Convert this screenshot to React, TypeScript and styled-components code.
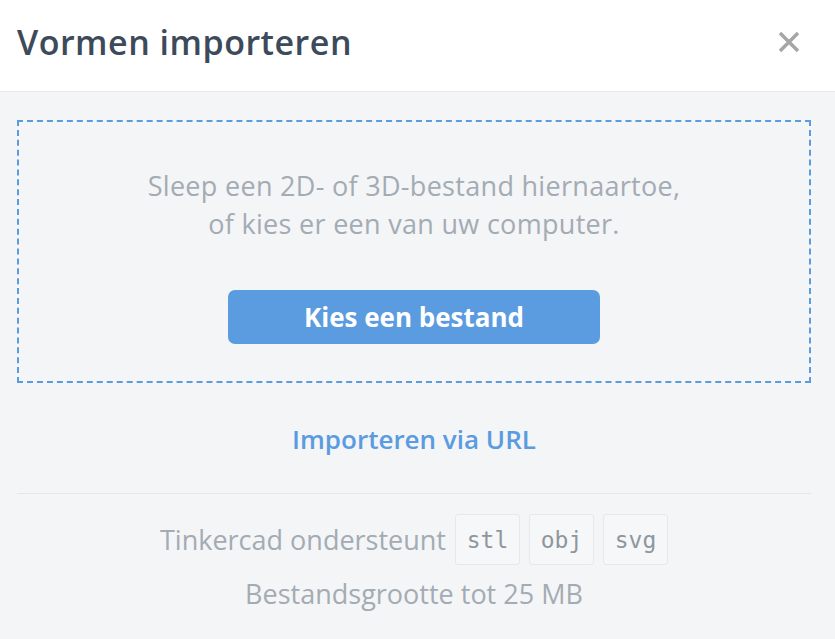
import React from 'react';
import styled, { createGlobalStyle } from 'styled-components';

const GlobalStyle = createGlobalStyle`
  html, body {
    margin: 0;
    padding: 0;
    background: #f4f5f7;
  }
  body {
    font-family: "Open Sans", "Noto Sans", sans-serif;
  }
`;

const Dialog = styled.div`
  width: 835px;
  height: 639px;
  background: #f4f5f7;
  display: flex;
  flex-direction: column;
  overflow: hidden;
`;

const Header = styled.header`
  height: 92px;
  background: #ffffff;
  border-bottom: 1px solid #e6e8eb;
  display: flex;
  align-items: center;
  justify-content: space-between;
  padding: 0 33px 8px 17px;
  box-sizing: border-box;
`;

const Title = styled.h1`
  margin: 0;
  font-size: 34px;
  font-weight: 600;
  color: #3c4a5a;
  letter-spacing: 0.5px;
`;

const CloseButton = styled.button`
  border: 0;
  background: transparent;
  padding: 0;
  width: 26px;
  height: 26px;
  display: flex;
  align-items: center;
  justify-content: center;
  cursor: pointer;
`;

const Body = styled.div`
  padding: 28px 24px 0 17px;
  display: flex;
  flex-direction: column;
  align-items: stretch;
`;

const DropZone = styled.div`
  border: 2px dashed #5b9be0;
  height: 263px;
  box-sizing: border-box;
  display: flex;
  flex-direction: column;
  align-items: center;
  padding-top: 45px;
`;

const Hint = styled.p`
  margin: 0;
  text-align: center;
  font-size: 27px;
  line-height: 38px;
  color: #a3abb3;
  letter-spacing: 0.3px;
`;

const PrimaryButton = styled.button`
  margin-top: 47px;
  width: 372px;
  height: 54px;
  border: 0;
  border-radius: 7px;
  background: #5b9be0;
  color: #ffffff;
  font-family: "Open Sans", "Noto Sans", sans-serif;
  font-size: 26px;
  font-weight: 700;
  cursor: pointer;
`;

const UrlLink = styled.a`
  align-self: center;
  margin-top: 37px;
  font-size: 26px;
  line-height: 38px;
  font-weight: 600;
  color: #5b9be0;
  text-decoration: none;
  cursor: pointer;
`;

const Divider = styled.hr`
  margin: 35px 0 0;
  border: 0;
  border-top: 1px solid #e4e6e9;
`;

const SupportRow = styled.div`
  margin-top: 20px;
  display: flex;
  align-items: center;
  justify-content: center;
  gap: 9px;
`;

const Muted = styled.span`
  font-size: 27px;
  line-height: 32px;
  color: #a3abb3;
`;

const Chip = styled.code`
  width: 65px;
  height: 51px;
  box-sizing: border-box;
  border: 1px solid #e6e8ea;
  border-radius: 3px;
  background: #f6f7f8;
  display: flex;
  align-items: center;
  justify-content: center;
  font-family: "DejaVu Sans Mono", "Liberation Mono", monospace;
  font-size: 23px;
  color: #8e969e;
`;

const SizeNote = styled(Muted)`
  margin-top: 13px;
  align-self: center;
`;

const formats = ['stl', 'obj', 'svg'];

const App = () => {
  return (
    <Dialog>
      <GlobalStyle />
      <Header>
        <Title>Vormen importeren</Title>
        <CloseButton aria-label="Sluiten">
          <svg width="22" height="22" viewBox="0 0 22 22">
            <path d="M2 2 L20 20 M20 2 L2 20" stroke="#a6a6a6" strokeWidth="3.5" />
          </svg>
        </CloseButton>
      </Header>
      <Body>
        <DropZone>
          <Hint>
            Sleep een 2D- of 3D-bestand hiernaartoe,
            <br />
            of kies er een van uw computer.
          </Hint>
          <PrimaryButton>Kies een bestand</PrimaryButton>
        </DropZone>
        <UrlLink>Importeren via URL</UrlLink>
        <Divider />
        <SupportRow>
          <Muted>Tinkercad ondersteunt</Muted>
          {formats.map((f) => (
            <Chip key={f}>{f}</Chip>
          ))}
        </SupportRow>
        <SizeNote>Bestandsgrootte tot 25 MB</SizeNote>
      </Body>
    </Dialog>
  );
};

export default App;
